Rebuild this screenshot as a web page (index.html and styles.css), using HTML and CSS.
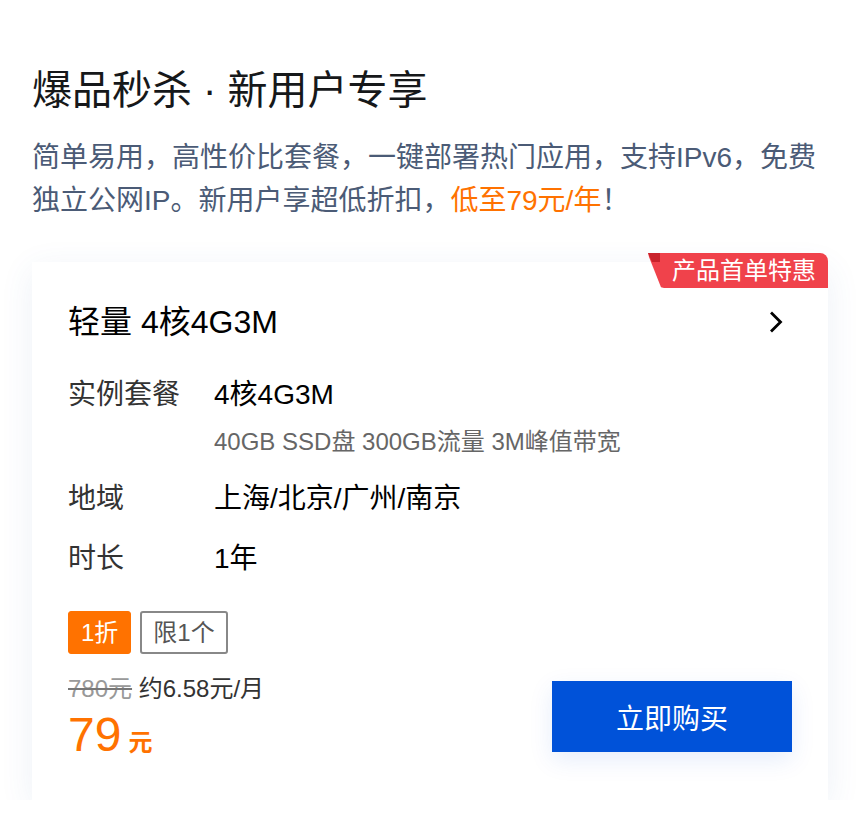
FILE: index.html
```html
<!DOCTYPE html>
<html lang="zh-CN">
<head>
<meta charset="utf-8">
<title>爆品秒杀 · 新用户专享</title>
<link rel="stylesheet" href="styles.css">
</head>
<body>
<main class="page">
  <h1 class="heading">爆品秒杀 · 新用户专享</h1>
  <p class="desc">简单易用，高性价比套餐，一键部署热门应用，支持IPv6，免费独立公网IP。新用户享超低折扣，<span class="hl">低至79元/年</span>！</p>

  <section class="card">
    <div class="ribbon">产品首单特惠</div>
    <div class="card-head">
      <h2 class="card-title">轻量 4核4G3M</h2>
      <svg class="chev" width="24" height="24" viewBox="0 0 24 24" aria-hidden="true">
        <path d="M4 3.5 L12.5 12 L4 20.5" fill="none" stroke="#000" stroke-width="2.8" stroke-linecap="square" stroke-linejoin="miter"/>
      </svg>
    </div>

    <div class="spec">
      <div class="row">
        <span class="label">实例套餐</span>
        <div class="value">
          <div>4核4G3M</div>
          <div class="sub">40GB SSD盘 300GB流量 3M峰值带宽</div>
        </div>
      </div>
      <div class="row">
        <span class="label">地域</span>
        <div class="value">上海/北京/广州/南京</div>
      </div>
      <div class="row">
        <span class="label">时长</span>
        <div class="value">1年</div>
      </div>
    </div>

    <div class="bottom">
      <div class="pricing">
        <div class="tags">
          <span class="tag tag-discount">1折</span>
          <span class="tag tag-limit">限1个</span>
        </div>
        <div class="orig"><s class="old">780元</s> 约6.58元/月</div>
        <div class="price"><span class="num">79</span><span class="unit">元</span></div>
      </div>
      <button class="buy" type="button">立即购买</button>
    </div>
  </section>
</main>
</body>
</html>
```

FILE: styles.css
```css
* { box-sizing: border-box; }

html, body {
  margin: 0;
  padding: 0;
  background: #fff;
}

body {
  font-family: "Liberation Sans", "Noto Sans CJK SC", sans-serif;
  color: #000;
}

.page {
  padding: 62px 32px 0;
}

.heading {
  margin: 0;
  font-size: 40px;
  line-height: 56px;
  font-weight: 400;
  color: #16181a;
}

.desc {
  margin: 18px 0 0;
  font-size: 28px;
  line-height: 43px;
  color: #4b5b76;
}

.hl { color: #ff7200; }

.card {
  position: relative;
  margin-top: 40px;
  background: #fff;
  padding: 40px 36px 41px;
  box-shadow: 0 8px 32px rgba(55, 99, 170, 0.09);
}

.ribbon {
  position: absolute;
  top: -9px;
  right: 0;
  width: 180px;
  height: 35px;
  padding-left: 24px;
  font-size: 24px;
  line-height: 35px;
  color: #fff;
  background: #f0424b;
  border-top-right-radius: 8px;
  clip-path: polygon(0 0, 100% 0, 100% 100%, 16px 100%, 13px 98%, 1px 4px);
}

.ribbon::before {
  content: "";
  position: absolute;
  left: 0;
  top: 0;
  width: 12px;
  height: 9px;
  background: #c9232c;
  clip-path: polygon(0 0, 100% 0, 100% 100%, 4px 100%);
}

.card-head {
  display: flex;
  align-items: center;
  justify-content: space-between;
}

.card-title {
  margin: 0;
  font-size: 32px;
  line-height: 40px;
  font-weight: 400;
  color: #000;
}

.chev { display: block; }

.spec {
  margin-top: 33px;
  display: flex;
  flex-direction: column;
  gap: 20px;
}

.row {
  display: flex;
  font-size: 28px;
  line-height: 40px;
}

.label {
  width: 146px;
  flex: none;
  color: #333;
}

.value { color: #000; }

.sub {
  margin-top: 10px;
  font-size: 24px;
  line-height: 34px;
  color: #666;
}

.bottom {
  margin-top: 32px;
  display: flex;
  justify-content: space-between;
  align-items: flex-end;
}

.tags {
  display: flex;
  gap: 9px;
}

.tag {
  display: block;
  height: 43px;
  padding: 0 12px;
  font-size: 24px;
  line-height: 41px;
  border-radius: 3px;
  border: 1px solid transparent;
}

.tag-discount {
  background: #ff7200;
  border-color: #ff7200;
  color: #fff;
}

.tag-limit {
  border: 2px solid #888;
  padding: 0 11px;
  line-height: 39px;
  color: #555;
}

.orig {
  margin-top: 18px;
  height: 34px;
  font-size: 24px;
  line-height: 34px;
  color: #333;
}

.old {
  color: #999;
  text-decoration-color: #777;
}

.price {
  margin-top: 5px;
  height: 48px;
  font-size: 48px;
  line-height: 48px;
  color: #ff7200;
}

.num {
  font-size: 48px;
}

.unit {
  margin-left: 7px;
  font-size: 24px;
  font-weight: 700;
}

.buy {
  width: 240px;
  height: 71px;
  margin-bottom: 7px;
  border: 0;
  border-radius: 0;
  background: #0052d9;
  color: #fff;
  font-family: inherit;
  font-size: 28px;
  cursor: pointer;
  box-shadow: 0 8px 24px rgba(0, 82, 217, 0.1);
}
```
